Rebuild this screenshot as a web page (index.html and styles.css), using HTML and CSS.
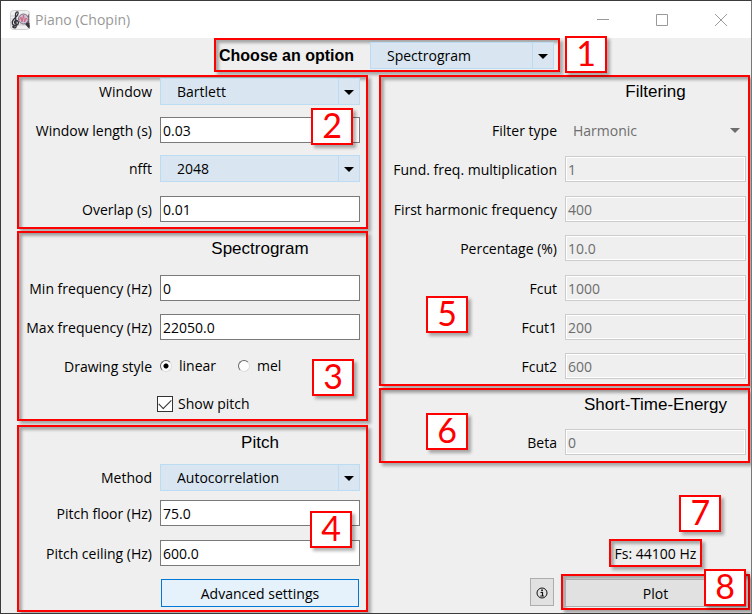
FILE: index.html
```html
<!DOCTYPE html>
<html lang="en">
<head>
<meta charset="utf-8">
<title>Piano (Chopin)</title>
<link rel="stylesheet" href="styles.css">
</head>
<body>
<header class="titlebar">
  <svg class="app-icon" viewBox="0 0 20 20" aria-hidden="true">
    <rect x="0.5" y="0.5" width="19" height="19" rx="3" fill="#f1f0f1" stroke="#d0cfd0"/>
    <path d="M1 6h18M1 9h18M1 12h18M1 15h18" stroke="#b5b2b5" stroke-width=".6"/>
    <path d="M3 17.500c2 1 3.500 0 3.200-2L5.500 5.500C5.200 3 7 1 8 2.200 9 4.500 6 7 4 9c-3 3-2 6.500 1.500 6.500 3.500 0 4-5 .8-5-2 0-2.500 2.500-.8 3.200" fill="none" stroke="#33313a" stroke-width="1.300"/>
    <circle cx="3.500" cy="16.800" r="1.300" fill="#33313a"/>
    <path d="M19 3v12l-3-3z" fill="#6b5560"/>
    <path d="M15 14l4.500-1v6z" fill="#3a343c"/>
    <circle cx="13.500" cy="9" r="5" fill="#cdbfd4" stroke="#77727d"/>
    <path d="M9.500 10l1.500-3 1 5 1.500-7 1 7 1.500-4 1.500 2" fill="none" stroke="#d0607c" stroke-width=".9"/>
    <path d="M16.500 13l2.500 4" stroke="#3a343c" stroke-width="2"/>
  </svg>
  <span class="app-title">Piano (Chopin)</span>
  <div class="window-controls">
    <button type="button" aria-label="Minimize"><svg viewBox="0 0 12 12"><path d="M0 5.500h12"/></svg></button>
    <button type="button" aria-label="Maximize"><svg viewBox="0 0 12 12"><path d="M.5.500h11v11H.5z"/></svg></button>
    <button type="button" aria-label="Close"><svg viewBox="0 0 12 12"><path d="M0 0l12 12M12 0L0 12"/></svg></button>
  </div>
</header>

<main>
  <div class="choose-row">
    <div class="frame choose">
      <label for="option">Choose an option</label>
      <span class="drop"><select id="option"><option>Spectrogram</option></select></span>
      <span class="badge badge-1">1</span>
    </div>
  </div>

  <form class="columns">
    <div class="column">
      <section class="frame panel window-panel">
        <label for="window">Window</label>
        <span class="drop"><select id="window"><option>Bartlett</option></select></span>
        <label for="length">Window length (s)</label>
        <input type="text" id="length" value="0.03">
        <label for="nfft">nfft</label>
        <span class="drop"><select id="nfft"><option>2048</option></select></span>
        <label for="overlap">Overlap (s)</label>
        <input type="text" id="overlap" value="0.01">
        <span class="badge badge-2">2</span>
      </section>

      <section class="frame panel spectrogram-panel">
        <h2>Spectrogram</h2>
        <label for="minf">Min frequency (Hz)</label>
        <input type="text" id="minf" value="0">
        <label for="maxf">Max frequency (Hz)</label>
        <input type="text" id="maxf" value="22050.0">
        <span class="caption" id="style-caption">Drawing style</span>
        <div class="radios" role="radiogroup" aria-labelledby="style-caption">
          <label><input type="radio" name="style" checked>linear</label>
          <label><input type="radio" name="style">mel</label>
        </div>
        <label class="check"><input type="checkbox" checked>Show pitch</label>
        <span class="badge badge-3">3</span>
      </section>

      <section class="frame panel pitch-panel">
        <h2>Pitch</h2>
        <label for="method">Method</label>
        <span class="drop"><select id="method"><option>Autocorrelation</option></select></span>
        <label for="floor">Pitch floor (Hz)</label>
        <input type="text" id="floor" value="75.0">
        <label for="ceiling">Pitch ceiling (Hz)</label>
        <input type="text" id="ceiling" value="600.0">
        <button type="button" class="button advanced">Advanced settings</button>
        <span class="badge badge-4">4</span>
      </section>
    </div>

    <div class="column right">
      <section class="frame panel filter-panel">
        <h2>Filtering</h2>
        <label for="ftype">Filter type</label>
        <span class="drop off"><select id="ftype" disabled><option>Harmonic</option></select></span>
        <label for="fund">Fund. freq. multiplication</label>
        <input type="text" id="fund" value="1" disabled>
        <label for="first">First harmonic frequency</label>
        <input type="text" id="first" value="400" disabled>
        <label for="percent">Percentage (%)</label>
        <input type="text" id="percent" value="10.0" disabled>
        <label for="fcut">Fcut</label>
        <input type="text" id="fcut" value="1000" disabled>
        <label for="fcut1">Fcut1</label>
        <input type="text" id="fcut1" value="200" disabled>
        <label for="fcut2">Fcut2</label>
        <input type="text" id="fcut2" value="600" disabled>
        <span class="badge badge-5">5</span>
      </section>

      <section class="frame panel energy-panel">
        <h2>Short-Time-Energy</h2>
        <label for="beta">Beta</label>
        <input type="text" id="beta" value="0" disabled>
        <span class="badge badge-6">6</span>
      </section>

      <div class="actions">
        <div class="frame rate">Fs: 44100 Hz<span class="badge badge-7">7</span></div>
        <button type="button" class="button info" aria-label="Information">
          <svg viewBox="0 0 12 12"><circle cx="6" cy="6" r="5" fill="none" stroke="#111"/><path d="M4.500 5.500H6.500V9M4.300 9h3.600" fill="none" stroke="#111" stroke-width="1.200"/><rect x="5.200" y="2.500" width="1.700" height="1.700" fill="#111"/></svg>
        </button>
        <div class="frame plot"><button type="button" class="button">Plot</button><span class="badge badge-8">8</span></div>
      </div>
    </div>
  </form>
</main>
</body>
</html>
```
FILE: styles.css
```css
* { box-sizing: border-box; }

body {
  margin: 0;
  min-height: 100vh;
  border: 1px solid #3c3b3c;
  border-right-color: #777;
  background: #efefef;
  color: #000;
  font: 14px/20px "Open Sans", "Noto Sans", sans-serif;
}

button, input, select { font: inherit; color: inherit; margin: 0; }

.titlebar {
  display: flex;
  align-items: center;
  height: 37px;
  padding: 0 1px 0 9px;
  background: #fff;
  color: #999;
}
.app-icon { width: 20px; height: 20px; }
.app-title { margin-left: 5px; }
.window-controls { display: flex; margin-left: auto; }
.window-controls button {
  display: grid;
  place-items: center;
  width: 59px;
  height: 36px;
  padding: 0;
  border: 0;
  background: none;
}
.window-controls svg {
  width: 12px;
  height: 12px;
  fill: none;
  stroke: #999;
}

.frame {
  position: relative;
  border: 2px solid #f00;
  box-shadow: 3px 3px 3px rgba(0, 0, 0, .3), inset 3px 3px 3px rgba(0, 0, 0, .3);
}

.badge {
  position: absolute;
  z-index: 1;
  width: 42px;
  height: 37px;
  border: 2px solid #f00;
  background: #fff;
  box-shadow: 3px 3px 3px rgba(0, 0, 0, .3);
  color: #f00;
  font: 34px/30px Lato, sans-serif;
  text-align: center;
}
.badge-1 { right: -49px; top: -4px; }
.badge-2 { right: 13px; top: 31px; }
.badge-3 { right: 12px; top: 126px; }
.badge-4 { right: 14px; top: 84px; }
.badge-5 { left: 45px; top: 219px; }
.badge-6 { left: 45px; top: 23px; }
.badge-7 { right: -21px; top: -46px; }
.badge-8 { right: 2px; top: -7px; }

.choose-row { display: flex; padding-left: 213px; }
.choose {
  display: flex;
  align-items: center;
  justify-content: space-between;
  width: 346px;
  height: 34px;
  padding: 1px 4px 0 3px;
}
.choose label { font: bold 16px/20px "Liberation Sans", Arial, sans-serif; }
.choose .drop { width: 184px; }

.columns {
  display: grid;
  grid-template-columns: 351fr 371fr;
  gap: 11px;
  padding: 3px 1px 1px 16px;
}
.column { display: flex; flex-direction: column; gap: 2px; }

.panel {
  display: grid;
  grid-template-columns: 133px 1fr;
  column-gap: 8px;
  padding: 5px 6px 5px 0;
}
.right .panel {
  grid-template-columns: 176px 1fr;
  padding-right: 2px;
}
.panel > label, .caption {
  height: 26px;
  line-height: 28px;
  text-align: right;
  white-space: nowrap;
}
.panel h2 {
  grid-column: 2;
  margin: 0;
  font: 17px/22px "Liberation Sans", Arial, sans-serif;
  text-align: center;
}

.window-panel { grid-template-rows: 39px 38px 41px 26px; padding-top: 1px; }
.spectrogram-panel { grid-template-rows: 37px 39px 39px 38px 26px; padding-bottom: 2px; }
.pitch-panel { grid-template-rows: 32px 36px 40px 39px 28px; margin-top: 2px; padding-bottom: 3px; }
.filter-panel { grid-template-rows: 36px 39px 40px 39px 40px 39px 39px 26px; padding-top: 4px; }
.energy-panel { grid-template-rows: 35px 26px; padding-top: 4px; padding-bottom: 6px; }

input[type="text"] {
  width: 100%;
  height: 26px;
  padding: 0 2px;
  border: 1px solid #7a7a7a;
  background: #fff;
}
input[type="text"]:disabled {
  border-color: #ccc;
  background: #efefef;
  box-shadow: inset 0 0 0 1px #fff;
  color: #6d6d6d;
}

.drop { position: relative; display: block; height: 27px; }
.drop select {
  width: 100%;
  height: 27px;
  padding: 1px 24px 0 16px;
  border: 1px solid #bcdcf4;
  border-radius: 0;
  background: linear-gradient(#bcdcf4, #bcdcf4) right 20px top / 1px 100% no-repeat #d9e6f1;
  appearance: none;
}
.drop::after {
  content: "";
  position: absolute;
  right: 6px;
  top: 12px;
  border: 5px solid transparent;
  border-top-color: #000;
  border-bottom: 0;
}
.drop.off select {
  padding: 0 24px 0 7px;
  border-color: transparent;
  background: none;
  color: #6d6d6d;
  opacity: 1;
}
.drop.off::after { top: 11px; border-top-color: #6d6d6d; }

.radios { display: flex; gap: 22px; height: 26px; }
.radios label { display: flex; align-items: center; gap: 7px; }
.radios input {
  appearance: none;
  width: 12px;
  height: 12px;
  border: 1px solid;
  border-color: #666 #ddd #ddd #666;
  border-radius: 50%;
  background: #fff;
}
.radios input:checked { background: radial-gradient(circle, #000 2px, #fff 3px); }

.panel .check {
  display: flex;
  grid-column: 2;
  align-items: center;
  gap: 5px;
  margin-left: -3px;
}
.check input {
  display: grid;
  place-items: center;
  appearance: none;
  width: 16px;
  height: 16px;
  border: 1px solid #333;
  background: #fff;
}
.check input::before {
  content: "";
  width: 11px;
  height: 6px;
  border: solid #333;
  border-width: 0 0 1px 1px;
  transform: translateY(-2px) rotate(-45deg);
}

.button {
  height: 28px;
  padding: 1px 0 0;
  border: 1px solid #adadad;
  background: #e1e1e1;
}
.advanced {
  grid-column: 2;
  margin: 0 1px;
  border-color: #0078d7;
  background: #e5f1fb;
}

.actions {
  display: grid;
  grid-template-columns: 182px 1fr;
  row-gap: 7px;
  margin-top: 74px;
}
.rate {
  grid-column: 2;
  justify-self: center;
  height: 28px;
  padding: 0 4px;
  line-height: 26px;
}
.info {
  display: grid;
  place-items: center;
  justify-self: end;
  align-self: center;
  width: 24px;
  margin-right: 7px;
}
.info svg { width: 12px; height: 12px; }
.plot { padding: 3px 2px 1px; }
.plot .button { display: block; width: 100%; }
```
